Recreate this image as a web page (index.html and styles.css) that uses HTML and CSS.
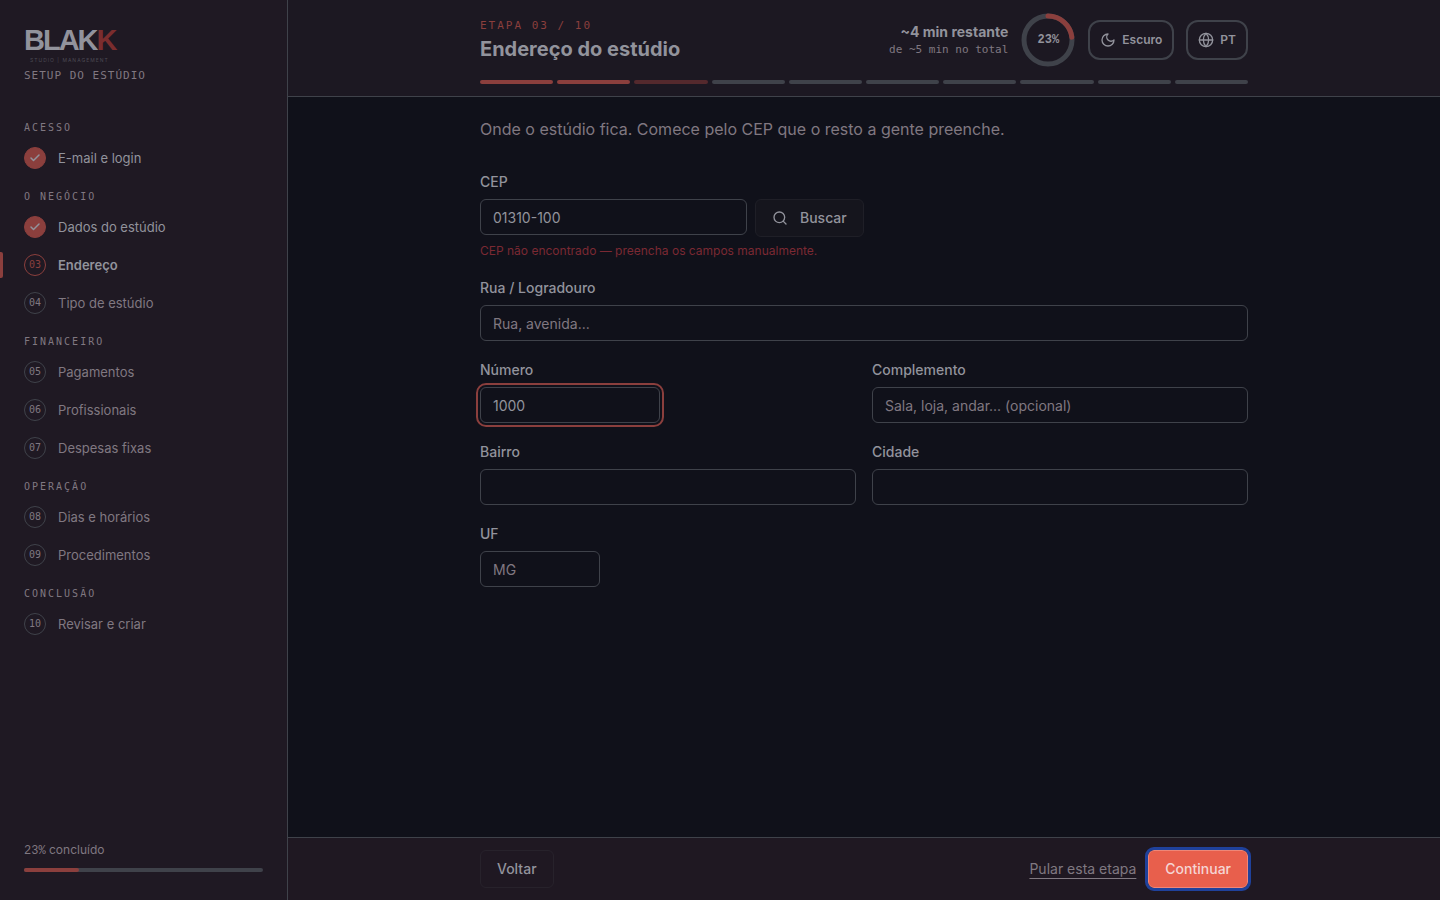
FILE: index.html
```html
<!DOCTYPE html>
<html lang="pt-BR">
<head>
    <meta charset="UTF-8">
    <meta name="viewport" content="width=device-width, initial-scale=1.0">
    <title>Setup do estúdio</title>
    <link rel="stylesheet" href="styles.css">
</head>
<body>

    <!-- Sidebar -->
    <aside class="sidebar">
        <div class="brand">
            <svg class="logo" viewBox="0 0 94 42" role="img" aria-label="BLAKK Studio Management">
                <text class="logo-name" x="0" y="26">BLAK<tspan class="logo-k">K</tspan></text>
                <text class="logo-sub" x="6" y="38">STUDIO | MANAGEMENT</text>
            </svg>
            <p class="brand-sub">SETUP DO ESTÚDIO</p>
        </div>

        <nav class="steps">
            <h2>ACESSO</h2>
            <a href="#" class="step done"><span class="dot"><svg viewBox="0 0 24 24"><path d="M20 6 9 17l-5-5"/></svg></span>E-mail e login</a>

            <h2>O NEGÓCIO</h2>
            <a href="#" class="step done"><span class="dot"><svg viewBox="0 0 24 24"><path d="M20 6 9 17l-5-5"/></svg></span>Dados do estúdio</a>
            <a href="#" class="step current"><span class="dot">03</span>Endereço</a>
            <a href="#" class="step"><span class="dot">04</span>Tipo de estúdio</a>

            <h2>FINANCEIRO</h2>
            <a href="#" class="step"><span class="dot">05</span>Pagamentos</a>
            <a href="#" class="step"><span class="dot">06</span>Profissionais</a>
            <a href="#" class="step"><span class="dot">07</span>Despesas fixas</a>

            <h2>OPERAÇÃO</h2>
            <a href="#" class="step"><span class="dot">08</span>Dias e horários</a>
            <a href="#" class="step"><span class="dot">09</span>Procedimentos</a>

            <h2>CONCLUSÃO</h2>
            <a href="#" class="step"><span class="dot">10</span>Revisar e criar</a>
        </nav>

        <div class="progress">
            <p><span class="mono">23%</span> concluído</p>
            <div class="bar"><div class="bar-fill" style="width: 23%"></div></div>
        </div>
    </aside>

    <div class="page">
        <!-- Header -->
        <header class="header">
            <div class="wrap">
                <div class="header-row">
                    <div class="title">
                        <p class="eyebrow">ETAPA 03 / 10</p>
                        <h1>Endereço do estúdio</h1>
                    </div>
                    <div class="header-tools">
                        <div class="time">
                            <strong>~4 min restante</strong>
                            <span>de ~5 min no total</span>
                        </div>
                        <div class="ring">
                            <svg viewBox="0 0 54 54">
                                <circle class="ring-track" cx="27" cy="27" r="24"/>
                                <circle class="ring-value" cx="27" cy="27" r="24" pathLength="100" stroke-dasharray="23 100" transform="rotate(-90 27 27)"/>
                            </svg>
                            <span>23%</span>
                        </div>
                        <button class="pill" type="button">
                            <svg viewBox="0 0 24 24"><path d="M12 3a6 6 0 0 0 9 9 9 9 0 1 1-9-9Z"/></svg>
                            Escuro
                        </button>
                        <button class="pill" type="button">
                            <svg viewBox="0 0 24 24"><circle cx="12" cy="12" r="10"/><path d="M12 2a14.5 14.5 0 0 0 0 20 14.5 14.5 0 0 0 0-20"/><path d="M2 12h20"/></svg>
                            PT
                        </button>
                    </div>
                </div>
                <div class="segments">
                    <i class="on"></i><i class="on"></i><i class="half"></i><i></i><i></i>
                    <i></i><i></i><i></i><i></i><i></i>
                </div>
            </div>
        </header>

        <!-- Form -->
        <main class="content">
            <form class="wrap form" id="address">
                <p class="intro">Onde o estúdio fica. Comece pelo CEP que o resto a gente preenche.</p>

                <div class="field">
                    <label for="cep">CEP</label>
                    <div class="cep-row">
                        <input type="text" id="cep" value="01310-100">
                        <button class="btn btn-search" type="button">
                            <svg viewBox="0 0 24 24"><circle cx="11" cy="11" r="8"/><path d="m21 21-4.3-4.3"/></svg>
                            Buscar
                        </button>
                    </div>
                    <p class="error">CEP não encontrado — preencha os campos manualmente.</p>
                </div>

                <div class="field">
                    <label for="rua">Rua / Logradouro</label>
                    <input type="text" id="rua" placeholder="Rua, avenida...">
                </div>

                <div class="grid">
                    <div class="field">
                        <label for="numero">Número</label>
                        <input type="text" id="numero" class="short focused" value="1000">
                    </div>
                    <div class="field">
                        <label for="complemento">Complemento</label>
                        <input type="text" id="complemento" placeholder="Sala, loja, andar... (opcional)">
                    </div>
                    <div class="field">
                        <label for="bairro">Bairro</label>
                        <input type="text" id="bairro">
                    </div>
                    <div class="field">
                        <label for="cidade">Cidade</label>
                        <input type="text" id="cidade">
                    </div>
                </div>

                <div class="field">
                    <label for="uf">UF</label>
                    <input type="text" id="uf" class="tiny" placeholder="MG">
                </div>
            </form>
        </main>

        <!-- Footer -->
        <footer class="footer">
            <div class="wrap footer-row">
                <button class="btn btn-back" type="button">Voltar</button>
                <div class="footer-actions">
                    <a href="#" class="skip">Pular esta etapa</a>
                    <button class="btn btn-next" type="submit" form="address">Continuar</button>
                </div>
            </div>
        </footer>
    </div>

</body>
</html>
```

FILE: styles.css
```css
* {
    box-sizing: border-box;
}

body {
    margin: 0;
    min-height: 100vh;
    display: flex;
    font-family: 'Inter', sans-serif;
    font-size: 14px;
    line-height: 20px;
    color: #92939c;
    background-color: #10111a;
}

h1, h2, p {
    margin: 0;
}

button, input {
    font-family: inherit;
    font-size: 14px;
    line-height: 20px;
    color: inherit;
}

svg {
    fill: none;
    stroke: currentColor;
    stroke-width: 2;
    stroke-linecap: round;
    stroke-linejoin: round;
}

.mono {
    font-family: 'Liberation Mono', monospace;
}

/* Sidebar */
.sidebar {
    flex: 0 0 288px;
    display: flex;
    flex-direction: column;
    padding: 24px 24px 28px;
    background-color: #1f1923;
    border-right: 1px solid #3f424a;
}

.logo {
    display: block;
    width: 94px;
    height: 42px;
    stroke: none;
    fill: #92939c;
}

.logo-name {
    font-family: 'Liberation Sans', sans-serif;
    font-size: 29px;
    font-weight: 700;
    letter-spacing: -2px;
}

.logo-k {
    fill: #7b2d2e;
}

.logo-sub {
    font-size: 5px;
    letter-spacing: 1px;
    fill: #4c4a54;
}

.brand-sub, .steps h2 {
    font-family: 'DejaVu Sans Mono', monospace;
    font-size: 10px;
    font-weight: 400;
    color: #807881;
}

.brand-sub {
    font-size: 11px;
    line-height: 20px;
    letter-spacing: 1px;
}

.steps {
    padding-top: 34px;
}

.steps h2 {
    line-height: 15px;
    letter-spacing: 2px;
    margin: 12px 0 4px;
}

.steps h2:first-child {
    margin-top: 0;
}

.step {
    position: relative;
    display: flex;
    align-items: center;
    gap: 12px;
    height: 38px;
    font-size: 13px;
    color: #807881;
    text-decoration: none;
}

.dot {
    width: 22px;
    height: 22px;
    display: flex;
    align-items: center;
    justify-content: center;
    border: 1px solid #3f424a;
    border-radius: 50%;
    font-family: 'DejaVu Sans Mono', monospace;
    font-size: 10px;
}

.dot svg {
    width: 12px;
    height: 12px;
    stroke-width: 3;
}

.step.done {
    color: #92939c;
}

.done .dot {
    background-color: #8b3f3d;
    border-color: #8b3f3d;
}

.step.current {
    font-weight: 600;
    color: #92939c;
}

.current .dot {
    border-color: #8b3f3d;
    color: #8b3f3d;
    font-weight: 400;
}

/* marker on the window edge */
.current::before {
    content: "";
    position: absolute;
    left: -24px;
    top: 6px;
    width: 3px;
    height: 26px;
    border-radius: 0 2px 2px 0;
    background-color: #8b3f3d;
}

.progress {
    margin-top: auto;
    font-size: 12px;
    line-height: 18px;
    color: #807881;
}

.bar {
    height: 4px;
    margin-top: 8px;
    border-radius: 2px;
    background-color: #3f424a;
}

.bar-fill {
    height: 4px;
    border-radius: 2px;
    background-color: #8b3f3d;
}

/* Page */
.page {
    flex: 1;
    min-width: 0;
    display: flex;
    flex-direction: column;
}

.wrap {
    width: 100%;
    max-width: 768px;
    margin: 0 auto;
}

/* Header */
.header {
    padding: 12px 24px;
    background-color: #1c1822;
    border-bottom: 1px solid #3f424a;
}

.header-row, .header-tools, .footer-row, .footer-actions {
    display: flex;
    align-items: center;
}

.header-row, .footer-row {
    justify-content: space-between;
}

.header-tools, .footer-actions {
    gap: 12px;
}

.eyebrow {
    font-family: 'DejaVu Sans Mono', monospace;
    font-size: 11px;
    line-height: 18px;
    letter-spacing: 2px;
    color: #8b3f3d;
}

h1 {
    font-size: 20px;
    font-weight: 700;
    line-height: 28px;
}

.time {
    display: flex;
    flex-direction: column;
    align-items: flex-end;
}

.time strong {
    font-weight: 700;
    line-height: 20px;
}

.time span {
    font-family: 'DejaVu Sans Mono', monospace;
    font-size: 11px;
    line-height: 16px;
    color: #807881;
}

.ring {
    display: grid;
    place-items: center;
    width: 56px;
    height: 56px;
}

.ring svg, .ring span {
    grid-area: 1 / 1;
}

.ring svg {
    width: 54px;
    height: 54px;
    stroke-width: 5;
}

.ring span {
    font-family: 'Liberation Mono', monospace;
    font-size: 12px;
    font-weight: 700;
}

.ring-track {
    stroke: #3f424a;
}

.ring-value {
    stroke: #8b3f3d;
}

.pill {
    display: flex;
    align-items: center;
    gap: 6px;
    height: 40px;
    padding: 0 10px;
    border: 2px solid #3f424a;
    border-radius: 12px;
    background: none;
    font-size: 12px;
    font-weight: 600;
}

.pill svg, .btn svg {
    width: 16px;
    height: 16px;
}

.segments {
    display: flex;
    gap: 4px;
    margin-top: 12px;
}

.segments i {
    flex: 1;
    height: 4px;
    border-radius: 2px;
    background-color: #3f424a;
}

.segments .on {
    background-color: #8b3f3d;
}

.segments .half {
    background-color: #54292d;
}

/* Form */
.content {
    flex: 1;
    padding: 20px 24px;
}

.form {
    display: flex;
    flex-direction: column;
    gap: 20px;
}

.intro {
    margin-bottom: 12px;
    font-size: 16px;
    line-height: 24px;
    color: #807881;
}

.field {
    display: flex;
    flex-direction: column;
    gap: 6px;
}

.field label {
    font-weight: 500;
    line-height: 18px;
    padding-bottom: 2px;
}

.field input {
    width: 100%;
    height: 36px;
    padding: 0 12px;
    border: 1px solid #3f424a;
    border-radius: 6px;
    background: none;
    outline: none;
}

.field input::placeholder {
    color: #807881;
    opacity: 1;
}

.cep-row {
    display: flex;
    gap: 8px;
}

.cep-row input {
    max-width: 267px;
}

.field .short {
    max-width: 180px;
}

.field .tiny {
    max-width: 120px;
}

.field .focused {
    outline: 2px solid #8b3f3d;
    outline-offset: 2px;
}

.error {
    font-size: 12px;
    line-height: 16px;
    color: #7b2933;
}

.grid {
    display: grid;
    grid-template-columns: 1fr 1fr;
    gap: 20px 16px;
}

/* Buttons */
.btn {
    display: flex;
    align-items: center;
    height: 38px;
    padding: 0 16px;
    border: 1px solid #27222b;
    border-radius: 6px;
    background: none;
    font-weight: 500;
}

.btn-search {
    gap: 12px;
    border-color: #1f1f27;
    background-color: #15151d;
}

.btn-next {
    border-color: #ee8677;
    background-color: #e85f4c;
    color: #f5d5d4;
    outline: 3px solid #1f419b;
}

/* Footer */
.footer {
    padding: 12px 24px;
    background-color: #1f1822;
    border-top: 1px solid #3f424a;
}

.skip {
    color: #807881;
    text-decoration: underline;
    text-underline-offset: 4px;
}

/* Responsive */
@media (max-width: 768px) {
    .sidebar {
        display: none;
    }

    .grid {
        grid-template-columns: 1fr;
    }
}
```
